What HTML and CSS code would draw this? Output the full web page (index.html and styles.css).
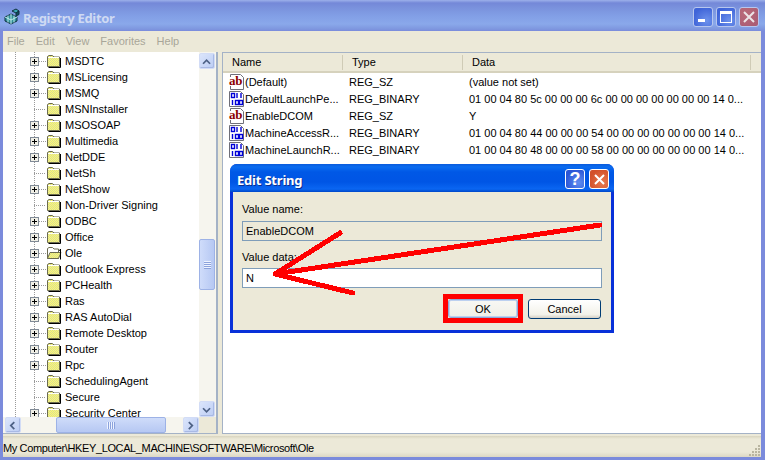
FILE: index.html
```html
<!DOCTYPE html>
<html lang="en">
<head>
<meta charset="utf-8">
<title>Registry Editor</title>
<link rel="stylesheet" href="styles.css">
</head>
<body>
<svg class="defs" width="0" height="0" aria-hidden="true">
  <defs>
    <pattern id="dither" width="2" height="2" patternUnits="userSpaceOnUse">
      <rect width="2" height="2" fill="#ffff70"/>
      <rect width="1" height="1" fill="#d8d898"/>
      <rect x="1" y="1" width="1" height="1" fill="#d8d898"/>
    </pattern>
    <symbol id="folder" viewBox="0 0 16 14">
      <path d="M1.500 12.500V2.500L3 1.500H6.500L8 3H13.500V12.500Z" fill="url(#dither)" stroke="#6b6b50"/>
      <path d="M2 3.500H13" stroke="#fff"/>
      <path d="M14.500 4V13.500H2.500" fill="none" stroke="#000"/>
    </symbol>
    <symbol id="folder-open" viewBox="0 0 16 14">
      <path d="M1.500 12.500V2.500L3 1.500H6.500L8 3H12.500V12.500Z" fill="#fff" stroke="#6b6b50"/>
      <path d="M1.500 12.500L4 6.500H15L12.500 12.500Z" fill="url(#dither)" stroke="#6b6b50"/>
      <path d="M13.500 5L14.500 3V13.500" fill="none" stroke="#000"/>
    </symbol>
    <symbol id="plus" viewBox="0 0 9 9">
      <rect x=".5" y=".5" width="8" height="8" fill="#f0efe6" stroke="#808a96"/>
      <path d="M2 4.500H7M4.500 2V7" stroke="#000"/>
    </symbol>
    <symbol id="ico-ab" viewBox="0 0 16 16">
      <path d="M1.500 .5H11.500L14.500 3.500V15.500H1.500Z" fill="#fff" stroke="#6f6f78"/>
      <rect x="0" y="3" width="14" height="9" fill="#fff"/>
    </symbol>
    <symbol id="ico-bin" viewBox="0 0 16 16">
      <path d="M.5 .5H11.500L14.500 3.500V15.500H.5Z" fill="#fff" stroke="#6f6f78"/>
      <g fill="none" stroke="#0000d8" stroke-width="1.400">
        <rect x="2.500" y="2.500" width="3" height="4"/>
        <path d="M8 2V7M12 2V7M3.500 9V14"/>
        <rect x="6.500" y="9.500" width="3" height="4"/>
        <rect x="10.500" y="9.500" width="3" height="4"/>
      </g>
    </symbol>
    <symbol id="arrow-up" viewBox="0 0 16 16"><path d="M3.500 10L7.500 6L11.500 10" fill="none" stroke="#4d6185" stroke-width="2"/></symbol>
    <symbol id="arrow-down" viewBox="0 0 16 16"><path d="M3.500 6L7.500 10L11.500 6" fill="none" stroke="#4d6185" stroke-width="2"/></symbol>
    <symbol id="arrow-left" viewBox="0 0 16 16"><path d="M9.500 3.500L5.500 7.500L9.500 11.500" fill="none" stroke="#4d6185" stroke-width="2"/></symbol>
    <symbol id="arrow-right" viewBox="0 0 16 16"><path d="M5.500 3.500L9.500 7.500L5.500 11.500" fill="none" stroke="#4d6185" stroke-width="2"/></symbol>
  </defs>
</svg>

<div class="window">
  <header class="titlebar">
    <svg class="app-icon" width="17" height="17" viewBox="0 0 17 17">
      <path d="M1 9L7 6L13 9V13L7 16L1 13Z" fill="#2f8f96" stroke="#10303f"/>
      <path d="M7 6V16M1 9L7 12L13 9M4 7.500V14.500M10 7.500V14.500" fill="none" stroke="#bfeaea"/>
      <path d="M8 3L12 1L15 3L12 5Z" fill="#3aa8b0" stroke="#10303f"/>
      <path d="M12 5V8L15 6.500V3Z" fill="#0f4f5f" stroke="#10303f"/>
    </svg>
    <span class="title-text">Registry Editor</span>
    <div class="win-buttons">
      <div class="win-btn win-btn-min"><span class="glyph-min"></span></div>
      <div class="win-btn win-btn-max"><span class="glyph-max"></span></div>
      <div class="win-btn win-btn-close">
        <svg width="14" height="14" viewBox="0 0 14 14"><path d="M2 2L12 12M12 2L2 12" stroke="#ece4e6" stroke-width="2"/></svg>
      </div>
    </div>
  </header>

  <nav class="menubar">
    <span>File</span><span>Edit</span><span>View</span><span>Favorites</span><span>Help</span>
  </nav>

  <main class="panes">
    <section class="tree-pane">
      <div class="tree-main">
        <div class="tree">
          <div class="row"><svg class="exp"><use href="#plus"/></svg><span class="dots"></span><svg class="fold"><use href="#folder"/></svg><span>MSDTC</span></div>
          <div class="row"><svg class="exp"><use href="#plus"/></svg><span class="dots"></span><svg class="fold"><use href="#folder"/></svg><span>MSLicensing</span></div>
          <div class="row"><svg class="exp"><use href="#plus"/></svg><span class="dots"></span><svg class="fold"><use href="#folder"/></svg><span>MSMQ</span></div>
          <div class="row"><span class="noexp"></span><span class="dots"></span><svg class="fold"><use href="#folder"/></svg><span>MSNInstaller</span></div>
          <div class="row"><svg class="exp"><use href="#plus"/></svg><span class="dots"></span><svg class="fold"><use href="#folder"/></svg><span>MSOSOAP</span></div>
          <div class="row"><svg class="exp"><use href="#plus"/></svg><span class="dots"></span><svg class="fold"><use href="#folder"/></svg><span>Multimedia</span></div>
          <div class="row"><svg class="exp"><use href="#plus"/></svg><span class="dots"></span><svg class="fold"><use href="#folder"/></svg><span>NetDDE</span></div>
          <div class="row"><span class="noexp"></span><span class="dots"></span><svg class="fold"><use href="#folder"/></svg><span>NetSh</span></div>
          <div class="row"><svg class="exp"><use href="#plus"/></svg><span class="dots"></span><svg class="fold"><use href="#folder"/></svg><span>NetShow</span></div>
          <div class="row"><span class="noexp"></span><span class="dots"></span><svg class="fold"><use href="#folder"/></svg><span>Non-Driver Signing</span></div>
          <div class="row"><svg class="exp"><use href="#plus"/></svg><span class="dots"></span><svg class="fold"><use href="#folder"/></svg><span>ODBC</span></div>
          <div class="row"><svg class="exp"><use href="#plus"/></svg><span class="dots"></span><svg class="fold"><use href="#folder"/></svg><span>Office</span></div>
          <div class="row"><svg class="exp"><use href="#plus"/></svg><span class="dots"></span><svg class="fold"><use href="#folder-open"/></svg><span>Ole</span></div>
          <div class="row"><svg class="exp"><use href="#plus"/></svg><span class="dots"></span><svg class="fold"><use href="#folder"/></svg><span>Outlook Express</span></div>
          <div class="row"><svg class="exp"><use href="#plus"/></svg><span class="dots"></span><svg class="fold"><use href="#folder"/></svg><span>PCHealth</span></div>
          <div class="row"><svg class="exp"><use href="#plus"/></svg><span class="dots"></span><svg class="fold"><use href="#folder"/></svg><span>Ras</span></div>
          <div class="row"><svg class="exp"><use href="#plus"/></svg><span class="dots"></span><svg class="fold"><use href="#folder"/></svg><span>RAS AutoDial</span></div>
          <div class="row"><svg class="exp"><use href="#plus"/></svg><span class="dots"></span><svg class="fold"><use href="#folder"/></svg><span>Remote Desktop</span></div>
          <div class="row"><svg class="exp"><use href="#plus"/></svg><span class="dots"></span><svg class="fold"><use href="#folder"/></svg><span>Router</span></div>
          <div class="row"><svg class="exp"><use href="#plus"/></svg><span class="dots"></span><svg class="fold"><use href="#folder"/></svg><span>Rpc</span></div>
          <div class="row"><span class="noexp"></span><span class="dots"></span><svg class="fold"><use href="#folder"/></svg><span>SchedulingAgent</span></div>
          <div class="row"><span class="noexp"></span><span class="dots"></span><svg class="fold"><use href="#folder"/></svg><span>Secure</span></div>
          <div class="row"><svg class="exp"><use href="#plus"/></svg><span class="dots"></span><svg class="fold"><use href="#folder"/></svg><span>Security Center</span></div>
        </div>
        <div class="vscroll">
          <div class="sb-btn"><svg width="16" height="16"><use href="#arrow-up"/></svg></div>
          <div class="v-track">
            <div class="v-thumb"><span class="grip-h"></span></div>
          </div>
          <div class="sb-btn"><svg width="16" height="16"><use href="#arrow-down"/></svg></div>
        </div>
      </div>
      <div class="hscroll">
        <div class="h-track-wrap">
          <div class="sb-btn"><svg width="16" height="16"><use href="#arrow-left"/></svg></div>
          <div class="h-track">
            <div class="h-thumb"><span class="grip-v"></span></div>
          </div>
          <div class="sb-btn"><svg width="16" height="16"><use href="#arrow-right"/></svg></div>
        </div>
        <div class="sb-corner"></div>
      </div>
    </section>

    <section class="list-pane">
      <div class="list-head">
        <span class="th th-name">Name</span>
        <span class="th th-type">Type</span>
        <span class="th th-data">Data</span>
        <span class="th th-end"></span>
      </div>
      <div class="list-row">
        <span class="cell-name"><span class="val-icon"><svg width="16" height="16"><use href="#ico-ab"/></svg><b class="ab">ab</b></span>(Default)</span>
        <span>REG_SZ</span><span>(value not set)</span>
      </div>
      <div class="list-row">
        <span class="cell-name"><span class="val-icon"><svg width="16" height="16"><use href="#ico-bin"/></svg></span>DefaultLaunchPe...</span>
        <span>REG_BINARY</span><span>01 00 04 80 5c 00 00 00 6c 00 00 00 00 00 00 00 14 0...</span>
      </div>
      <div class="list-row">
        <span class="cell-name"><span class="val-icon"><svg width="16" height="16"><use href="#ico-ab"/></svg><b class="ab">ab</b></span>EnableDCOM</span>
        <span>REG_SZ</span><span>Y</span>
      </div>
      <div class="list-row">
        <span class="cell-name"><span class="val-icon"><svg width="16" height="16"><use href="#ico-bin"/></svg></span>MachineAccessR...</span>
        <span>REG_BINARY</span><span>01 00 04 80 44 00 00 00 54 00 00 00 00 00 00 00 14 0...</span>
      </div>
      <div class="list-row">
        <span class="cell-name"><span class="val-icon"><svg width="16" height="16"><use href="#ico-bin"/></svg></span>MachineLaunchR...</span>
        <span>REG_BINARY</span><span>01 00 04 80 48 00 00 00 58 00 00 00 00 00 00 00 14 0...</span>
      </div>
    </section>
  </main>

  <footer class="statusbar">
    <span class="status-text">My Computer\HKEY_LOCAL_MACHINE\SOFTWARE\Microsoft\Ole</span>
    <svg class="gripper" width="12" height="12" viewBox="0 0 12 12">
      <path d="M9 1h2v2H9zM6 4h2v2H6zM9 4h2v2H9zM3 7h2v2H3zM6 7h2v2H6zM9 7h2v2H9zM0 10h2v2H0zM3 10h2v2H3zM6 10h2v2H6zM9 10h2v2H9z" fill="#b9b5a0"/>
    </svg>
  </footer>
</div>

<div class="dialog">
  <div class="dlg-title">
    <span class="dlg-title-text">Edit String</span>
    <div class="dlg-buttons">
      <div class="dlg-btn dlg-help">?</div>
      <div class="dlg-btn dlg-close">
        <svg width="13" height="13" viewBox="0 0 13 13"><path d="M2 2L11 11M11 2L2 11" stroke="#fff" stroke-width="2"/></svg>
      </div>
    </div>
  </div>
  <div class="dlg-body">
    <div class="dlg-label">Value name:</div>
    <div class="dlg-input dlg-input-ro">EnableDCOM</div>
    <div class="dlg-label dlg-label-2">Value data:</div>
    <div class="dlg-input">N</div>
    <div class="dlg-actions">
      <div class="ok-mark"><div class="xp-btn xp-btn-default">OK</div></div>
      <div class="xp-btn">Cancel</div>
    </div>
  </div>
</div>

<svg class="annot" width="765" height="460" viewBox="0 0 765 460" aria-hidden="true">
  <path d="M600 225L275 274L340 233M275 274L353 293" fill="none" stroke="#ff0000" stroke-width="5" stroke-linecap="round" stroke-linejoin="round" shape-rendering="crispEdges"/>
</svg>
</body>
</html>
```

FILE: styles.css
```css
* { box-sizing: border-box; }
html, body { margin: 0; padding: 0; }
body {
  width: 765px;
  height: 460px;
  overflow: hidden;
  position: relative;
  font-family: "Liberation Sans", "Noto Sans", sans-serif;
  font-size: 11px;
  color: #000;
}
.defs { position: absolute; }
.window {
  width: 765px;
  height: 460px;
  display: flex;
  flex-direction: column;
  background: #7b8bdc;
  padding-bottom: 3px;
}
.titlebar {
  height: 31px;
  flex: none;
  display: flex;
  align-items: center;
  padding: 2px 6px 0 4px;
  background: linear-gradient(#9cb0ea 0, #7488d8 3px, #7a92dd 8px, #829fe6 16px, #8aa8ea 24px, #7e97df 29px, #7b8bdc 31px);
}
.app-icon { margin-right: 2px; }
.title-text {
  font-family: "Noto Sans", sans-serif;
  font-weight: 700;
  font-size: 13px;
  letter-spacing: -.3px;
  padding-top: 2px;
  color: #cfdaf3;
  flex: 1;
}
.win-buttons { display: flex; gap: 3px; }
.win-btn {
  width: 20px;
  height: 20px;
  border: 1px solid #b7c6ee;
  border-radius: 3px;
  position: relative;
  display: flex;
  align-items: center;
  justify-content: center;
  background: radial-gradient(circle at 70% 70%, #6d92ec, #3f64d8 75%);
}
.win-btn-close { background: radial-gradient(circle at 30% 30%, #b96a78, #a85a74); }
.glyph-min { position: absolute; left: 4px; bottom: 4px; width: 7px; height: 3px; background: #fff; }
.glyph-max { width: 12px; height: 12px; border: 1px solid #fff; border-top-width: 3px; }

.menubar {
  height: 19px;
  flex: none;
  margin: 0 4px 0 3px;
  background: #ece9d8;
  color: #a8a699;
  display: flex;
  gap: 11px;
  align-items: center;
  padding-left: 4px;
}

.panes {
  flex: 1;
  min-height: 0;
  margin: 0 4px 0 3px;
  display: flex;
  background: #ece9d8;
  padding: 2px 0 2px;
  border-bottom: 0;
}
.tree-pane {
  width: 215px;
  flex: none;
  display: flex;
  flex-direction: column;
  border-right: 2px solid #a4b2c6;
  border-bottom: 1px solid #a4b2c6;
  background: #fff;
}
.tree-main { flex: 1; min-height: 0; display: flex; }
.tree {
  flex: 1;
  min-width: 0;
  overflow: hidden;
  padding-top: 1px;
  background-image:
    repeating-linear-gradient(#9a9a9a 0 1px, transparent 1px 2px),
    repeating-linear-gradient(#9a9a9a 0 1px, transparent 1px 2px);
  background-size: 1px 100%, 1px 100%;
  background-position: 12px 0, 31px 0;
  background-repeat: no-repeat;
}
.row {
  height: 16px;
  display: flex;
  align-items: center;
  padding-left: 27px;
  white-space: nowrap;
  flex: none;
}
.exp { width: 9px; height: 9px; flex: none; }
.noexp { width: 9px; height: 9px; flex: none; }
.dots {
  width: 7px;
  height: 1px;
  flex: none;
  background: repeating-linear-gradient(90deg, #9a9a9a 0 1px, transparent 1px 2px);
}
.noexp + .dots { width: 12px; margin-left: -5px; }
.fold { width: 16px; height: 14px; margin-right: 3px; flex: none; }

.vscroll {
  width: 17px;
  flex: none;
  display: flex;
  flex-direction: column;
  padding: 1px 1px 0 0;
  background: #f6f5ee;
}
.sb-btn {
  width: 16px;
  height: 16px;
  flex: none;
  border: 1px solid #d2dcf6;
  border-radius: 2px;
  background: linear-gradient(135deg, #dbe5fb, #bccdf4);
  box-shadow: inset -1px -1px 0 #a8b9e4;
  display: flex;
}
.v-track { flex: 1; padding-top: 170px; }
.v-thumb {
  width: 16px;
  height: 51px;
  border: 1px solid #9db2e6;
  border-radius: 2px;
  background: linear-gradient(90deg, #cfdcfa, #b6c8f3);
  display: flex;
  align-items: center;
  justify-content: center;
}
.grip-h {
  width: 7px;
  height: 8px;
  background: repeating-linear-gradient(#eef3ff 0 1px, #8ba2dc 1px 2px);
}
.hscroll { height: 16px; flex: none; display: flex; background: #f6f5ee; }
.h-track-wrap { flex: 1; display: flex; padding-left: 2px; }
.h-track { flex: 1; padding-left: 35px; padding-right: 17px; }
.h-thumb {
  height: 16px;
  border: 1px solid #9db2e6;
  border-radius: 2px;
  background: linear-gradient(#cfdcfa, #b6c8f3);
  display: flex;
  align-items: center;
  justify-content: center;
}
.grip-v {
  width: 8px;
  height: 7px;
  background: repeating-linear-gradient(90deg, #eef3ff 0 1px, #8ba2dc 1px 2px);
}
.sb-corner { width: 17px; background: #ece9d8; }

.list-pane {
  flex: 1;
  margin-left: 4px;
  background: #fff;
  border-top: 1px solid #a4b2c6;
  border-bottom: 1px solid #a4b2c6;
  border-left: 1px solid #a4b2c6;
}
.list-head {
  height: 20px;
  display: flex;
  align-items: center;
  background: #ece9d8;
  border-bottom: 2px solid #d6d2bd;
}
.th { height: 15px; line-height: 15px; border-right: 1px solid #cfcbb6; padding-left: 9px; flex: none; }
.th-name { width: 120px; }
.th-type { width: 120px; }
.th-data { width: 288px; }
.th-end { border-right: 0; flex: 1; }
.list-row {
  height: 17px;
  display: grid;
  grid-template-columns: 120px 120px 1fr;
  align-items: center;
  padding-left: 6px;
  white-space: nowrap;
}
.cell-name { display: flex; align-items: center; }
.val-icon { position: relative; width: 16px; height: 16px; display: block; flex: none; }
.val-icon svg { display: block; }
.ab {
  position: absolute;
  left: 0;
  top: 0;
  font-family: "Liberation Serif", serif;
  font-size: 13px;
  line-height: 14px;
  letter-spacing: -.3px;
  color: #8b0000;
  font-weight: 700;
}

.statusbar {
  height: 21px;
  flex: none;
  margin: 0 4px 0 3px;
  display: flex;
  align-items: center;
  justify-content: space-between;
  background: linear-gradient(#d8d4be 0, #ece9d8 3px, #ece9d8 16px, #dcd8c4 100%);
  padding: 2px 0 0;
}
.status-text { letter-spacing: -.38px; }
.gripper { align-self: flex-end; margin-bottom: 1px; }

.dialog {
  position: absolute;
  left: 230px;
  top: 164px;
  width: 384px;
  height: 169px;
  background: #0831d9;
  border-radius: 7px 7px 0 0;
  padding: 0 3px 3px;
  display: flex;
  flex-direction: column;
}
.dlg-title {
  height: 28px;
  flex: none;
  margin: 0 -3px;
  padding: 2px 5px 0 7px;
  display: flex;
  align-items: center;
  justify-content: space-between;
  border-radius: 7px 7px 0 0;
  background: linear-gradient(#0a5bdc 0, #0a6cf0 3px, #0058e6 8px, #0055e5 18px, #0a66f2 25px, #0047c8 28px);
}
.dlg-title-text {
  font-family: "Noto Sans", sans-serif;
  color: #fff;
  font-weight: 700;
  font-size: 13px;
  letter-spacing: -.2px;
  padding-top: 2px;
  text-shadow: 1px 1px 0 #0a2f90;
}
.dlg-buttons { display: flex; gap: 4px; }
.dlg-btn {
  width: 20px;
  height: 20px;
  border: 1px solid #fff;
  border-radius: 3px;
  display: flex;
  align-items: center;
  justify-content: center;
  color: #fff;
  font-weight: 700;
  font-size: 18px;
}
.dlg-help { background: radial-gradient(circle at 70% 70%, #5f8df0, #2a55d6 75%); }
.dlg-close { background: radial-gradient(circle at 70% 70%, #e87a50, #d2502a 75%); }
.dlg-body {
  flex: 1;
  background: #ece9d8;
  padding: 0 9px 0 9px;
  display: flex;
  flex-direction: column;
}
.dlg-label { height: 15px; line-height: 15px; margin-top: 10px; }
.dlg-label-2 { margin-top: 9px; }
.dlg-input {
  height: 20px;
  line-height: 18px;
  border: 1px solid #7f9db9;
  background: #fff;
  padding-left: 3px;
  margin-top: 4px;
  flex: none;
}
.dlg-input-ro { background: #ece9d8; }
.dlg-label-2 + .dlg-input { margin-top: 3px; }
.dlg-actions { display: flex; gap: 5px; justify-content: flex-end; align-items: center; margin-top: 6px; padding-right: 1px; }
.ok-mark { border: 5px solid #ff0000; flex: none; }
.xp-btn {
  width: 73px;
  height: 20px;
  line-height: 18px;
  text-align: center;
  border: 1px solid #003c74;
  border-radius: 3px;
  background: linear-gradient(#fff, #f3f2ea 80%, #d6d0c5);
}
.xp-btn-default {
  width: 70px;
  height: 19px;
  border: 1px solid #8fa9d6;
  background: linear-gradient(#f8f8f4, #f0efe8);
  box-shadow: inset 0 0 0 1px #bcd0f0;
}

.annot { position: absolute; left: 0; top: 0; }
```
